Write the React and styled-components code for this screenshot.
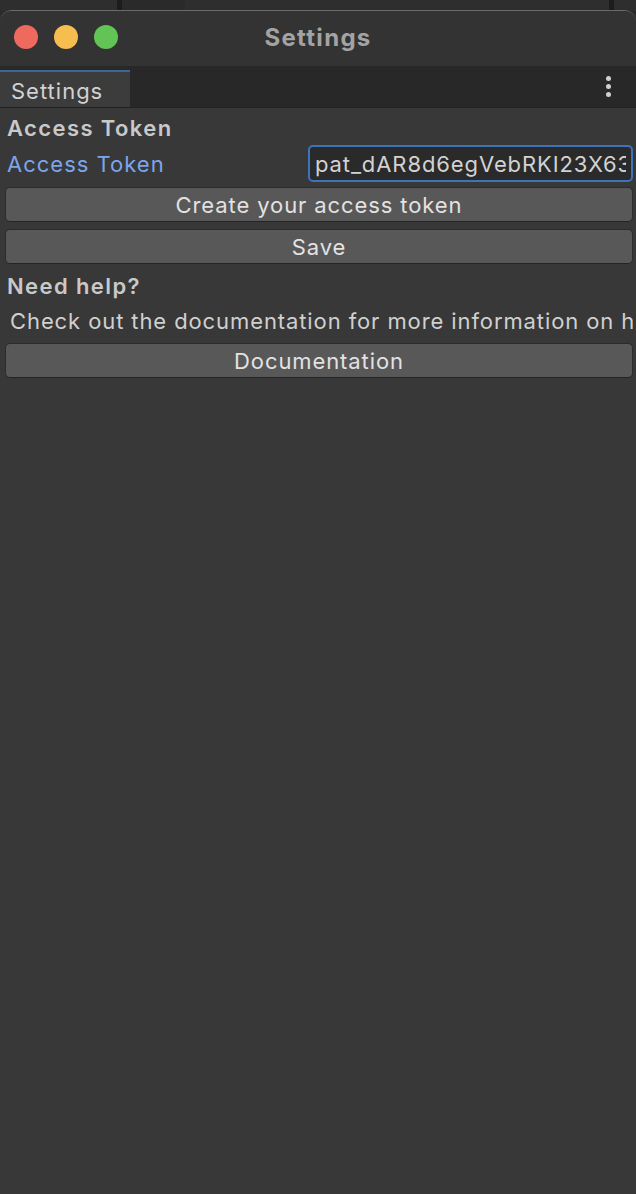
import React, { useState } from 'react';
import styled, { createGlobalStyle } from 'styled-components';

const GlobalStyle = createGlobalStyle`
  html, body {
    margin: 0;
    padding: 0;
    background: #2b2b2b;
  }
  #root {
    height: 1194px;
  }
  * {
    box-sizing: border-box;
  }
`;

const App = () => {
  const [token, setToken] = useState('pat_dAR8d6egVebRKI23X63bQmN0sLp');

  return (
    <>
      <GlobalStyle />
      <Page>
        <Backdrop>
          <BackPane $width={117} />
          <BackDivider />
          <BackPane $width={63} $shade="#2a2a2a" />
          <BackPane $grow />
          <BackDivider />
          <BackPane $width={22} />
        </Backdrop>
        <Window>
          <TitleBar>
            <Lights>
              <Light $color="#ee6a5f" />
              <Light $color="#f5be4f" />
              <Light $color="#62c454" />
            </Lights>
            <Title>Settings</Title>
          </TitleBar>
          <TabBar>
            <Tab>Settings</Tab>
            <MenuButton aria-label="more">
              <Dot />
              <Dot />
              <Dot />
            </MenuButton>
          </TabBar>
          <Content>
            <SectionTitle>Access Token</SectionTitle>
            <FieldRow>
              <FieldLabel>Access Token</FieldLabel>
              <TokenInput value={token} onChange={e => setToken(e.target.value)} />
            </FieldRow>
            <Button $top={5}>Create your access token</Button>
            <Button $top={7}>Save</Button>
            <SectionTitle $top={8}>Need help?</SectionTitle>
            <HelpText>Check out the documentation for more information on how to get started with the package.</HelpText>
            <Button $top={7}>Documentation</Button>
          </Content>
        </Window>
      </Page>
    </>
  );
};

export default App;

const Page = styled.div`
  display: flex;
  flex-direction: column;
  height: 1194px;
  font-family: Inter, 'Liberation Sans', sans-serif;
`;

const Backdrop = styled.div`
  display: flex;
  height: 11px;
  flex-shrink: 0;
  background: #2e2e2e;
`;

const BackPane = styled.div`
  width: ${p => (p.$width ? `${p.$width}px` : 'auto')};
  flex: ${p => (p.$grow ? 1 : 'none')};
  background: ${p => p.$shade || '#2e2e2e'};
`;

const BackDivider = styled.div`
  width: 5px;
  background: #1c1c1c;
`;

const Window = styled.div`
  flex: 1;
  display: flex;
  flex-direction: column;
  margin-top: -1px;
  border-top: 1px solid #6b6b6b;
  border-radius: 12px 12px 0 0;
  overflow: hidden;
  background: #383838;
`;

const TitleBar = styled.div`
  position: relative;
  display: flex;
  align-items: center;
  justify-content: center;
  height: 55px;
  background: #333333;
`;

const Lights = styled.div`
  position: absolute;
  left: 14px;
  top: 14px;
  display: flex;
  gap: 16px;
`;

const Light = styled.span`
  width: 24px;
  height: 24px;
  border-radius: 50%;
  background: ${p => p.$color};
`;

const Title = styled.div`
  margin-top: -2px;
  font-size: 24px;
  font-weight: 700;
  color: #a3a3a3;
  letter-spacing: 1.3px;
`;

const TabBar = styled.div`
  display: flex;
  align-items: flex-end;
  justify-content: space-between;
  height: 42px;
  background: #282828;
  border-bottom: 1px solid #222222;
`;

const Tab = styled.div`
  width: 130px;
  height: 37px;
  padding: 4px 0 0 11px;
  background: #3c3c3c;
  border-top: 2px solid #3b6796;
  font-size: 22px;
  letter-spacing: 1px;
  color: #d2d2d2;
  line-height: 30px;
`;

const MenuButton = styled.div`
  display: flex;
  flex-direction: column;
  gap: 3px;
  align-self: center;
  margin-right: 25px;
`;

const Dot = styled.span`
  width: 5px;
  height: 5px;
  border-radius: 50%;
  background: #cfcfcf;
`;

const Content = styled.div`
  display: flex;
  flex-direction: column;
  padding: 6px 3px 0 5px;
`;

const SectionTitle = styled.div`
  padding-left: 2px;
  margin-top: ${p => (p.$top ? `${p.$top}px` : '0')};
  font-size: 22px;
  font-weight: 600;
  letter-spacing: 1.4px;
  color: #c9c9c9;
  line-height: 28px;
`;

const FieldRow = styled.div`
  display: flex;
  align-items: center;
  justify-content: space-between;
  height: 37px;
  margin-top: 3px;
`;

const FieldLabel = styled.div`
  padding-left: 2px;
  font-size: 22px;
  letter-spacing: 1px;
  color: #7ca5ea;
`;

const TokenInput = styled.input`
  width: 325px;
  height: 37px;
  padding: 0 5px;
  background: #2a2a2a;
  border: 2px solid #3d74b9;
  border-radius: 5px;
  color: #d2d2d2;
  font-family: Inter, 'Liberation Sans', sans-serif;
  font-size: 22px;
  letter-spacing: 0.9px;
  outline: none;
`;

const Button = styled.button`
  flex-shrink: 0;
  height: 35px;
  width: 100%;
  margin-top: ${p => p.$top}px;
  padding: 0;
  background: #585858;
  border: 1px solid #2c2c2c;
  border-bottom-color: #242424;
  border-radius: 5px;
  color: #e2e2e2;
  font-family: Inter, 'Liberation Sans', sans-serif;
  font-size: 22px;
  letter-spacing: 0.9px;
  line-height: 1;
`;

const HelpText = styled.div`
  margin-top: 6px;
  padding-left: 5px;
  white-space: nowrap;
  overflow: hidden;
  font-size: 22px;
  letter-spacing: 0.9px;
  color: #d0d0d0;
  line-height: 30px;
`;
